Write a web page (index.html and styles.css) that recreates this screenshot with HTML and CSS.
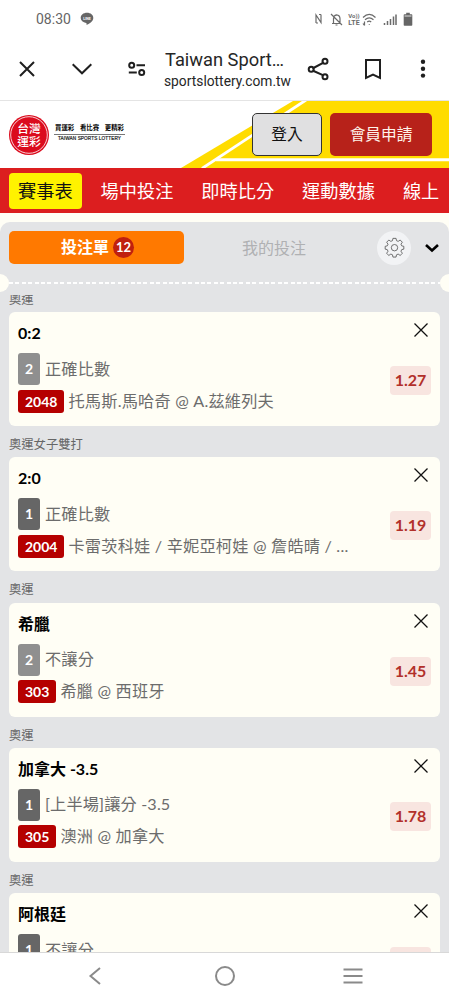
FILE: index.html
```
<!DOCTYPE html>
<html lang="zh-Hant">
<head>
<meta charset="utf-8">
<title>Taiwan Sports Lottery</title>
<link rel="stylesheet" href="styles.css">
</head>
<body>
<div class="phone">
  <header class="status">
    <span class="clock">08:30</span>
    <svg class="line" width="14" height="14" viewBox="0 0 14 14"><path d="M7 .8C3.300.8.7 3 .7 5.900c0 2.600 2.300 4.500 5.400 5 .6.1.5 1 .5 2 2.200-1 6.700-3.600 6.700-7C13.300 3 10.700.8 7 .8z" fill="#666"/><text x="7" y="7.600" class="line-word">LINE</text></svg>
    <svg class="sys" width="102" height="16" viewBox="0 0 102 16" fill="none" stroke="#6b6b6b" stroke-width="1.200">
      <path d="M3 12V4l5 7.500V3.500M5 12H3M6 3.500h2"/>
      <path d="M18 3l11 11M19 12.500h9M20.500 12V7.500c0-2 1.200-3.300 3-3.700 2.200.2 3.500 1.700 3.500 4V12M22.500 14h2"/>
      <text class="volte" x="41" y="7.200">Vo))</text><text class="volte big" x="41" y="14">LTE</text>
      <path d="M50 6.500c4-4 8.500-4 12.500 0M52 8.800c3-2.600 5.500-2.600 8.500 0M54.200 11c1.500-1.200 2.600-1.200 4 0M56.300 13.200v.8M51.500 10.500v4M50 12.500l1.500 2"/>
      <path d="M71.500 14v-2M74.500 14v-4M77.500 14V8M80.500 14V5.500M83 14V3.500" stroke-width="1.500"/>
      <path d="M91.500 3.200h1.700V1.700h3.600v1.500h1.700q.8 0 .8.800v10q0 .8-.8.800h-7q-.8 0-.8-.8V4q0-.8.8-.8z" fill="#666" stroke="none"/><path d="M91.500 5h7" stroke="#fff" stroke-width=".8"/>
    </svg>
  </header>

  <div class="browser">
    <svg class="b-x" width="18" height="18" viewBox="0 0 18 18"><path d="M2 2l14 14M16 2L2 16"/></svg>
    <svg class="b-down" width="22" height="14" viewBox="0 0 22 14"><path d="M1.700 2.300l9.300 9 9.300-9"/></svg>
    <svg class="b-tune" width="20" height="16" viewBox="0 0 20 16"><circle cx="4.700" cy="4.200" r="2.500"/><circle cx="14.700" cy="11.500" r="2.500"/><path d="M9.500 4.200H18M1.800 11.500h8"/></svg>
    <div class="address"><div class="page-title">Taiwan Sport…</div><div class="host">sportslottery.com.tw</div></div>
    <svg class="b-share" width="24" height="26" viewBox="0 0 24 26"><path d="M5.500 12.500L17 6.300M5.500 14.500L17 19.700"/><circle cx="4.200" cy="13.300" r="2.500"/><circle cx="18" cy="5.300" r="2.500"/><circle cx="18" cy="20.800" r="2.500"/></svg>
    <svg class="b-mark" width="18" height="22" viewBox="0 0 18 22"><path d="M2 2h14v18l-7-3.500L2 20z"/></svg>
    <svg class="b-more" width="6" height="20" viewBox="0 0 6 20"><circle cx="3" cy="2.800" r="2.200"/><circle cx="3" cy="9.700" r="2.200"/><circle cx="3" cy="16.600" r="2.200"/></svg>
  </div>

  <div class="banner">
    <svg class="stripes" width="449" height="67" viewBox="0 0 449 67"><path d="M181 67L293 0h156v67z" fill="#ffdc00"/><path d="M202 67.500L306 -1" stroke="#fff" stroke-width="2.800"/><path d="M216 58.700h233" stroke="#fff" stroke-width="3"/></svg>
    <svg class="logo" width="40" height="40" viewBox="0 0 40 40"><circle cx="20" cy="20" r="20" fill="#db0b1d"/><circle cx="20" cy="20" r="18.300" fill="none" stroke="#fff" stroke-width=".8"/><text x="20" y="18.300">台灣</text><text x="20" y="30.800">運彩</text></svg>
    <div class="brand"><div class="brand-zh"><span>買運彩</span><span>看比賽</span><span>更精彩</span></div><div class="brand-en">TAIWAN SPORTS LOTTERY</div></div>
    <div class="login">登入</div>
    <div class="join">會員申請</div>
  </div>

  <nav class="nav"><span class="on">賽事表</span><span>場中投注</span><span>即時比分</span><span>運動數據</span><span>線上</span></nav>

  <main class="slip">
    <div class="tabs">
      <div class="tab-on"><span class="tab-text">投注單</span><span class="count">12</span></div>
      <div class="tab-off">我的投注</div>
      <div class="gear"><svg width="21" height="21" viewBox="0 0 22 23"><path d="M9.300 1.500h3.400l.5 2.500 1.800.8 2.200-1.500 2.400 2.400-1.500 2.200.8 1.800 2.300.5v3.100l-2.300.5-.8 1.800 1.500 2.200-2.400 2.400-2.200-1.500-1.800.8-.5 2.500H9.300l-.5-2.500-1.800-.8-2.200 1.500-2.400-2.400 1.500-2.200-.8-1.800-2.300-.5v-3.100l2.300-.5.8-1.800-1.500-2.200 2.400-2.400L7 4.800 8.800 4z"/><circle cx="11" cy="11.700" r="3.500"/></svg></div>
      <svg class="fold" width="16" height="10" viewBox="0 0 16 10"><path d="M2 2l6 5.500L14 2"/></svg>
    </div>
    <div class="tear"><i></i><b></b><i></i></div>
    <div class="list">
      <div class="group">奧運</div>
      <section class="card"><div class="info"><h2>0:2</h2><div class="row"><em class="side light">2</em><span>正確比數</span></div><div class="row match"><em class="no">2048</em><span>托馬斯.馬哈奇 @ A.茲維列夫</span></div></div><div class="act"><svg class="del" width="16" height="16" viewBox="0 0 16 16"><path d="M1.500 1.500l13 13M14.500 1.500l-13 13"/></svg><div class="odds">1.27</div></div></section>
      <div class="group">奧運女子雙打</div>
      <section class="card"><div class="info"><h2>2:0</h2><div class="row"><em class="side">1</em><span>正確比數</span></div><div class="row match"><em class="no">2004</em><span>卡雷茨科娃 / 辛妮亞柯娃 @ 詹皓晴 / ...</span></div></div><div class="act"><svg class="del" width="16" height="16" viewBox="0 0 16 16"><path d="M1.500 1.500l13 13M14.500 1.500l-13 13"/></svg><div class="odds">1.19</div></div></section>
      <div class="group">奧運</div>
      <section class="card"><div class="info"><h2>希臘</h2><div class="row"><em class="side light">2</em><span>不讓分</span></div><div class="row match"><em class="no">303</em><span>希臘 @ 西班牙</span></div></div><div class="act"><svg class="del" width="16" height="16" viewBox="0 0 16 16"><path d="M1.500 1.500l13 13M14.500 1.500l-13 13"/></svg><div class="odds">1.45</div></div></section>
      <div class="group">奧運</div>
      <section class="card"><div class="info"><h2>加拿大 -3.5</h2><div class="row"><em class="side">1</em><span>[上半場]讓分 -3.5</span></div><div class="row match"><em class="no">305</em><span>澳洲 @ 加拿大</span></div></div><div class="act"><svg class="del" width="16" height="16" viewBox="0 0 16 16"><path d="M1.500 1.500l13 13M14.500 1.500l-13 13"/></svg><div class="odds">1.78</div></div></section>
      <div class="group">奧運</div>
      <section class="card"><div class="info"><h2>阿根廷</h2><div class="row"><em class="side">1</em><span>不讓分</span></div></div><div class="act"><svg class="del" width="16" height="16" viewBox="0 0 16 16"><path d="M1.500 1.500l13 13M14.500 1.500l-13 13"/></svg><div class="odds"></div></div></section>
    </div>
  </main>

  <footer class="keys">
    <svg width="14" height="20" viewBox="0 0 14 20"><path d="M12 2L2.500 10l9.500 8"/></svg>
    <svg class="home" width="22" height="22" viewBox="0 0 22 22"><circle cx="11" cy="11" r="9"/></svg>
    <svg width="22" height="18" viewBox="0 0 22 18"><path d="M1.500 2.500h19M1.500 9h19M1.500 15.500h19"/></svg>
  </footer>
</div>
</body>
</html>
```
FILE: styles.css
```
* { box-sizing: border-box; }
body { margin: 0; background: #fff; font-family: Lato, "Noto Sans CJK TC", sans-serif; }
svg { display: block; flex: none; }
.phone { width: 449px; height: 1000px; display: flex; flex-direction: column; overflow: hidden; background: #fffef5; }

.status { height: 37px; flex: none; display: flex; align-items: center; padding: 0 34px 0 36px; background: #fff; font-family: Roboto, sans-serif; }
.clock { font-size: 14px; color: #666; width: 44px; white-space: nowrap; }
.line-word { font: 700 3.5px Roboto, sans-serif; fill: #fff; text-anchor: middle; }
.sys { margin-left: auto; }
.volte { font: 700 6px Roboto, sans-serif; fill: #6b6b6b; stroke: none; text-anchor: middle; }
.big { font-size: 7px; }

.browser { height: 64px; flex: none; display: flex; align-items: center; padding: 0 0 0 18px; background: #fff; font-family: Roboto, sans-serif; border-bottom: 1px solid #e4e4e4; }
.browser svg { fill: none; stroke: #1f1f1f; stroke-width: 2; }
.b-down { margin-left: 35px; }
.b-tune { margin-left: 34px; }
.address { width: 133px; margin-left: 17px; color: #262626; white-space: nowrap; }
.page-title { font-size: 18.300px; line-height: 23px; padding-left: 1px; margin-top: 2px; }
.host { font-size: 13.800px; line-height: 21px; }
.browser .b-share { margin-left: 10px; }
.browser .b-mark { margin-left: 33px; }
.browser .b-more { margin-left: 38px; fill: #1f1f1f; stroke: none; }

.banner { position: relative; height: 67px; flex: none; display: flex; align-items: center; padding: 0 17px 0 9px; background: #fff; }
.stripes { position: absolute; left: 0; top: 0; }
.logo, .brand, .login, .join { position: relative; }
.logo text { font: 500 11.800px "Noto Sans CJK TC", sans-serif; fill: #fff; text-anchor: middle; }
.brand { margin: -3px 0 0 5px; width: 71px; }
.brand-zh { display: flex; justify-content: space-between; padding: 0 1px 2px; font: 700 6.400px/9px "Noto Sans CJK TC", sans-serif; border-bottom: 1px solid #777; }
.brand-en { font: 400 4.700px/8px "Liberation Sans", sans-serif; letter-spacing: .1px; text-align: center; white-space: nowrap; color: #222; -webkit-text-stroke: .2px #222; }
.login, .join { height: 43px; border-radius: 5px; font-size: 15.700px; line-height: 41px; text-align: center; }
.login { margin-left: auto; width: 70px; background: #e0e0e1; border: 1px solid #333; color: #111; }
.join { margin-left: 8px; width: 102px; line-height: 43px; background: #b7221a; color: #fff3ea; }

.nav { height: 45px; flex: none; display: flex; align-items: center; gap: 10px; padding-left: 9px; background: #dc1e1f; color: #fff; font-size: 18.200px; white-space: nowrap; overflow: hidden; }
.nav span { padding: 0 9px; height: 36px; line-height: 37px; border-radius: 4px; }
.nav .on { background: #fff200; color: #111; }

.slip { flex: 1; min-height: 0; margin-top: 9px; border-radius: 10px 10px 0 0; background: #e3e4e6; display: flex; flex-direction: column; overflow: hidden; }
.tabs { height: 51px; flex: none; display: flex; align-items: center; padding: 0 8px 0 9px; }
.tab-on { width: 175px; height: 33px; border-radius: 5px; background: #ff7900; color: #fff; font-weight: 700; font-size: 16px; display: flex; align-items: center; justify-content: center; gap: 4px; padding-left: 2px; }
.tab-text { line-height: 30px; padding-bottom: 1px; }
.count { width: 21px; height: 21px; border-radius: 50%; background: #c0200f; font-size: 13px; line-height: 21px; text-align: center; }
.tab-off { width: 180px; text-align: center; font-size: 16px; line-height: 30px; color: #b0b1b3; }
.gear { width: 34px; height: 34px; margin-left: 13px; border-radius: 50%; background: #f2f3f5; display: grid; place-items: center; }
.gear path, .gear circle { fill: none; stroke: #555; stroke-width: .9; }
.fold { margin-left: 13px; }
.fold path { fill: none; stroke: #000; stroke-width: 2.600; }
.tear { height: 19px; flex: none; display: flex; align-items: center; }
.tear i { width: 18px; height: 18px; flex: none; border-radius: 50%; background: #fffef5; margin-left: -9px; }
.tear i:last-child { margin: 0 -9px 0 0; }
.tear b { flex: 1; height: 2px; background: repeating-linear-gradient(90deg, #fff 0 4px, transparent 4px 6.400px); }
.list { flex: 1; min-height: 0; overflow: hidden; padding: 0 9px; margin-top: 3px; }
.group { height: 31.300px; padding-top: 10px; font-size: 12.300px; line-height: 18px; color: #666; }
.group:first-child { height: 17px; padding: 0; line-height: 10px; }
.card { height: 114px; display: flex; justify-content: space-between; padding: 9px 9px 0; border-radius: 6px; background: #fffef5; }
.card h2 { margin: 0 0 8px; font-size: 16px; line-height: 24px; color: #000; }
.row { display: flex; align-items: center; height: 32px; gap: 5px; font-size: 16.200px; letter-spacing: .15px; color: #6c6c6c; white-space: nowrap; }
.row span { line-height: 24px; padding-bottom: 1px; }
.match { gap: 4px; letter-spacing: .2px; }
.row em { font-style: normal; font-weight: 700; font-size: 14px; letter-spacing: 0; color: #fff; text-align: center; border-radius: 3px; }
.side { width: 22px; height: 32px; line-height: 32px; background: #666; }
.side.light { background: #8f8f8f; }
.no { padding: 0 7px; height: 23px; line-height: 23px; background: #b50000; }
.act { display: flex; flex-direction: column; align-items: flex-end; }
.del { margin: 1px 2px 0 0; }
.del path { fill: none; stroke: #111; stroke-width: 1.300; }
.odds { width: 41px; height: 29px; margin-top: 28px; border-radius: 4px; background: #f8e5e0; color: #b2302a; font-weight: 700; font-size: 16px; line-height: 28px; text-align: center; }

.keys { height: 48px; flex: none; display: flex; align-items: center; justify-content: space-between; padding: 0 85px 2px 88px; background: #fff; border-top: 1px solid #d8d8d8; }
.keys svg { fill: none; stroke: #8a8a8a; stroke-width: 2; }
.keys .home { margin-left: 5px; }
```
